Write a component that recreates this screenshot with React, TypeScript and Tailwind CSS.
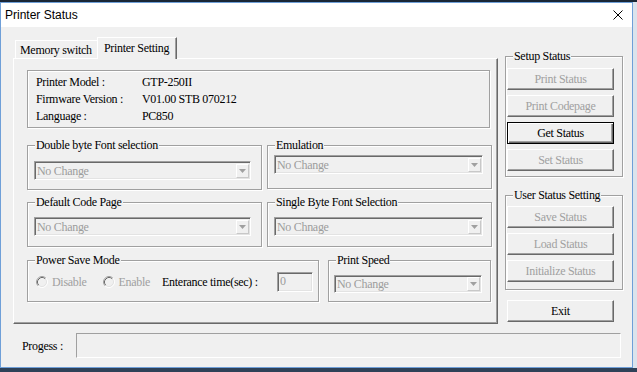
import type { ReactNode } from "react";

const info = [
  ["Printer Model :", "GTP-250II"],
  ["Firmware Version :", "V01.00 STB 070212"],
  ["Language :", "PC850"],
];

function Group({ label, className, children }: { label: string; className: string; children?: ReactNode }) {
  return (
    <div className={`relative border border-[#a0a0a0] shadow-[inset_1px_1px_0_#fff,1px_1px_0_#fff] ${className}`}>
      <span className="absolute left-[7px] -top-[8px] bg-[#f0f0f0] px-[1px] leading-[14px] whitespace-nowrap">
        {label}
      </span>
      {children}
    </div>
  );
}

function Combo({ text, className }: { text: string; className: string }) {
  return (
    <div
      className={`flex items-center justify-between border border-t-[#a0a0a0] border-l-[#a0a0a0] border-r-white border-b-white bg-[#f0f0f0] pl-[2px] pr-[1px] shadow-[inset_1px_1px_0_#696969,inset_-1px_-1px_0_#e3e3e3] ${className}`}
    >
      <span className="leading-none text-[#9c9c9c]">{text}</span>
      <span className="flex h-[14px] w-[13px] items-center justify-center border border-t-white border-l-white border-r-[#c8c8c8] border-b-[#c8c8c8]">
        <svg width="7" height="4" viewBox="0 0 7 4">
          <path d="M0 0h7L3.5 4z" fill="#a0a0a0" />
        </svg>
      </span>
    </div>
  );
}

function Btn({ label, active, className = "" }: { label: string; active?: boolean; className?: string }) {
  const look = active
    ? "border-black text-black shadow-[inset_1px_1px_0_#fff,inset_-1px_-1px_0_#696969,inset_-2px_-2px_0_#a0a0a0]"
    : "border-t-white border-l-white border-r-[#696969] border-b-[#696969] text-[#a0a0a0] shadow-[inset_-1px_-1px_0_#a0a0a0]";
  return (
    <div className={`flex h-[22px] w-[107px] items-center justify-center border bg-[#f0f0f0] ${look} ${className}`}>
      {label}
    </div>
  );
}

function Radio({ label }: { label: string }) {
  return (
    <span className="flex items-center gap-[4px] text-[#a0a0a0]">
      <svg width="12" height="12" viewBox="0 0 12 12">
        <circle cx="6" cy="6" r="4.5" fill="#f0f0f0" />
        <path d="M2.11 9.89A5.5 5.5 0 0 1 9.89 2.11" fill="none" stroke="#a0a0a0" />
        <path d="M9.89 2.11A5.5 5.5 0 0 1 2.11 9.89" fill="none" stroke="#fff" />
        <path d="M2.82 9.18A4.5 4.5 0 0 1 9.18 2.82" fill="none" stroke="#696969" />
        <path d="M9.18 2.82A4.5 4.5 0 0 1 2.82 9.18" fill="none" stroke="#e3e3e3" />
      </svg>
      {label}
    </span>
  );
}

export default function App() {
  return (
    <div className="flex h-[372px] w-[637px] flex-col overflow-hidden bg-[#2b3d52] font-['Liberation_Serif',serif] text-[12px] tracking-[-0.3px] text-black">
      <div className="h-[2px] shrink-0 bg-[#1a2636]" />
      <div className="flex h-[366px] shrink-0">
        <div className="flex w-[633px] flex-col border border-[#6f9fd8]">
          {/* title bar */}
          <div className="flex h-[24px] shrink-0 items-center justify-between bg-white pl-[4px] pr-[9px] font-['Liberation_Sans',sans-serif] tracking-normal">
            <span>Printer Status</span>
            <svg width="10" height="10" viewBox="0 0 10 10">
              <path d="M0.5 0.5l9 9M9.5 0.5l-9 9" stroke="#000" strokeWidth="1" />
            </svg>
          </div>

          <div className="flex flex-1 flex-col bg-[#f0f0f0]">
            <div className="flex pl-[12px] pt-[10px]">
              {/* tab control */}
              <div className="flex w-[485px] flex-col">
                <div className="flex h-[21px] items-end pl-[2px]">
                  <div className="flex h-[18px] w-[82px] items-center border-t border-l border-white pl-[4px]">
                    Memory switch
                  </div>
                  <div className="relative z-10 -mb-px flex h-[22px] w-[80px] items-center border-t border-l border-r border-t-white border-l-white border-r-[#696969] bg-[#f0f0f0] pl-[6px] pb-[2px] shadow-[inset_-1px_0_0_#a0a0a0]">
                    Printer Setting
                  </div>
                </div>
                <div className="h-[266px] border border-t-white border-l-white border-r-[#696969] border-b-[#696969] pl-[13px] pt-[11px] shadow-[inset_-1px_-1px_0_#a0a0a0]">
                  <div className="h-[58px] w-[463px] border border-[#a0a0a0] pl-[8px] pt-[3px] leading-[17px] shadow-[inset_1px_1px_0_#fff,1px_1px_0_#fff]">
                    {info.map(([k, v]) => (
                      <div key={k} className="flex">
                        <span className="w-[106px]">{k}</span>
                        <span>{v}</span>
                      </div>
                    ))}
                  </div>

                  <div className="mt-[17px] flex gap-[5px]">
                    <Group label="Double byte Font selection" className="h-[45px] w-[235px]">
                      <Combo text="No Change" className="ml-[6px] mt-[15px] h-[19px] w-[217px]" />
                    </Group>
                    <Group label="Emulation" className="h-[44px] w-[225px]">
                      <Combo text="No Change" className="ml-[6px] mt-[9px] h-[19px] w-[209px]" />
                    </Group>
                  </div>

                  <div className="mt-[12px] flex gap-[5px]">
                    <Group label="Default Code Page" className="h-[45px] w-[235px]">
                      <Combo text="No Change" className="ml-[6px] mt-[14px] h-[19px] w-[217px]" />
                    </Group>
                    <Group label="Single Byte Font Selection" className="h-[45px] w-[225px]">
                      <Combo text="No Chnage" className="ml-[6px] mt-[14px] h-[19px] w-[209px]" />
                    </Group>
                  </div>

                  <div className="mt-[13px] flex gap-[9px]">
                    <Group label="Power Save Mode" className="h-[42px] w-[292px]">
                      <div className="mt-[11px] flex h-[20px] items-center pl-[8px]">
                        <Radio label="Disable" />
                        <span className="ml-[16px]">
                          <Radio label="Enable" />
                        </span>
                        <span className="ml-[12px]">Enterance time(sec) :</span>
                        <span className="ml-auto mr-[5px] flex h-[20px] w-[36px] items-start border border-t-[#a0a0a0] border-l-[#a0a0a0] border-r-white border-b-white pl-[2px] pt-[1px] leading-[14px] text-[#9c9c9c] shadow-[inset_1px_1px_0_#696969,inset_-1px_-1px_0_#e3e3e3]">
                          0
                        </span>
                      </div>
                    </Group>
                    <Group label="Print Speed" className="h-[42px] w-[163px]">
                      <Combo text="No Change" className="ml-[5px] mt-[14px] h-[18px] w-[148px]" />
                    </Group>
                  </div>
                </div>
              </div>

              {/* right column */}
              <div className="ml-[7px] mt-[19px] flex w-[118px] flex-col">
                <Group label="Setup Status" className="flex h-[121px] flex-col gap-[5px] pl-[1px] pt-[11px]">
                  <Btn label="Print Status" />
                  <Btn label="Print Codepage" />
                  <Btn label="Get Status" active />
                  <Btn label="Set Status" />
                </Group>
                <Group label="User Status Setting" className="mt-[18px] flex h-[95px] flex-col gap-[5px] pl-[1px] pt-[10px]">
                  <Btn label="Save Status" />
                  <Btn label="Load Status" />
                  <Btn label="Initialize Status" />
                </Group>
                <Btn label="Exit" active={false} className="ml-[2px] mt-[10px] !text-black" />
              </div>
            </div>

            {/* progress */}
            <div className="mt-[9px] flex h-[25px] items-center pl-[21px]">
              <span className="w-[54px]">Progess :</span>
              <div className="h-[25px] w-[545px] border border-t-[#a0a0a0] border-l-[#a0a0a0] border-r-white border-b-white" />
            </div>
          </div>
        </div>
        <div className="flex-1 bg-[#dbe3ec]" />
      </div>
      <div className="flex-1 bg-[#2e4158]" />
    </div>
  );
}
